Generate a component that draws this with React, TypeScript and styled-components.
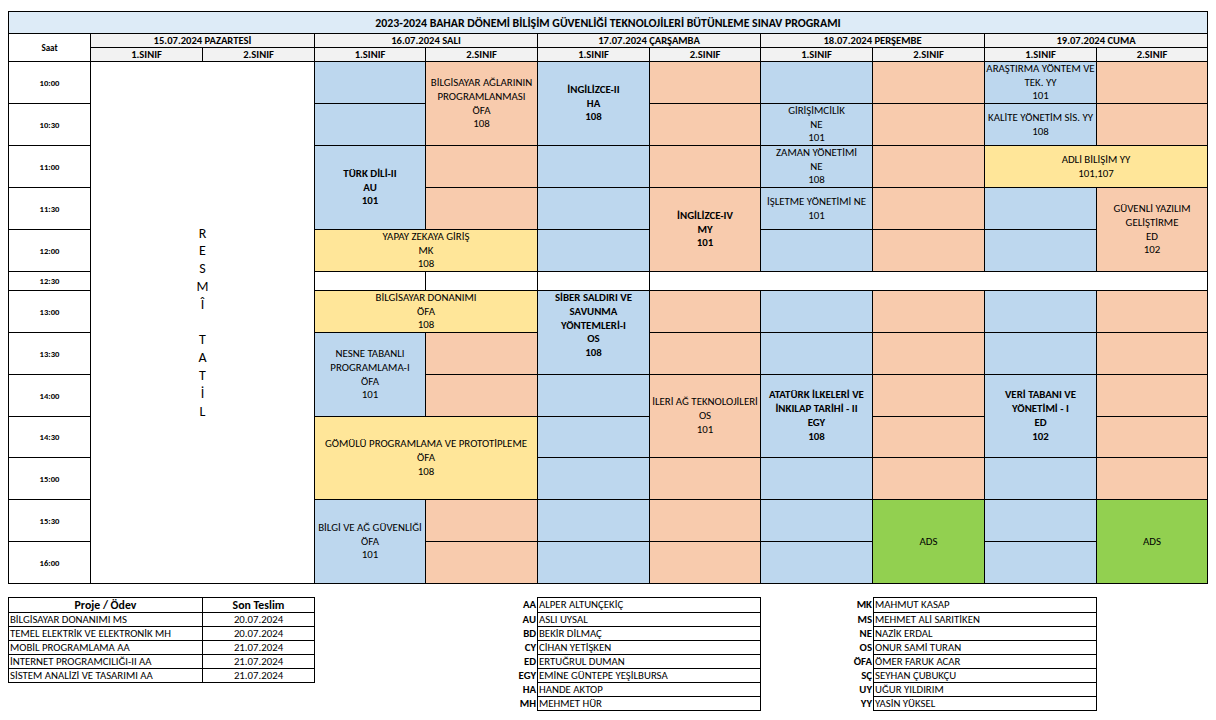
import React from "react";
import styled, { createGlobalStyle } from "styled-components";

const GlobalStyle = createGlobalStyle`
  html, body { margin: 0; padding: 0; background: #ffffff; }
  body { font-family: Calibri, Carlito, Lato, "Liberation Sans", sans-serif; color: #000000; }
  * { box-sizing: border-box; }
`;

const COLORS = {
  blue: "#BDD7EE",
  peach: "#F8CBAD",
  yellow: "#FFE699",
  green: "#92D050",
  white: "#FFFFFF",
} as const;
type Tone = keyof typeof COLORS;

const Page = styled.div`
  padding: 11px 0 0 8px;
`;

const Sheet = styled.div`
  display: grid;
  width: max-content;
  grid-template-columns: 81px 111px 111px 110px 111px 111px 110px 111px 111px 111px 110px;
  grid-template-rows: 21px 13px 13px repeat(5, 41px) 18px 41px 41px 41px 40px 41px 41px 41px;
  gap: 1px;
  background: #000000;
  border: 1px solid #000000;
`;

const Title = styled.div`
  grid-column: 1 / -1;
  grid-row: 1;
  background: #ddebf7;
  display: flex;
  align-items: center;
  justify-content: center;
  font-weight: 700;
  font-size: 11.85px;
  white-space: nowrap;
`;

const SaatHead = styled.div`
  grid-column: 1;
  grid-row: 2 / span 2;
  background: #ffffff;
  display: flex;
  align-items: center;
  justify-content: center;
  font-weight: 700;
  font-size: 9px;
`;

const HeadCell = styled.div<{ $col: number; $row: number; $span: number }>`
  grid-column: ${(p) => p.$col} / span ${(p) => p.$span};
  grid-row: ${(p) => p.$row};
  background: #f2f2f2;
  display: flex;
  align-items: center;
  justify-content: center;
  font-weight: 700;
  font-size: 10.6px;
  line-height: 13px;
  white-space: nowrap;
`;

const TimeCell = styled.div<{ $row: number }>`
  grid-column: 1;
  grid-row: ${(p) => p.$row};
  background: #ffffff;
  display: flex;
  align-items: center;
  justify-content: center;
  font-weight: 700;
  font-size: 8.6px;
`;

const Slot = styled.div<{
  $col: number;
  $row: number;
  $cs: number;
  $rs: number;
  $tone: Tone;
  $bold: boolean;
  $lift: number;
}>`
  grid-column: ${(p) => p.$col} / span ${(p) => p.$cs};
  grid-row: ${(p) => p.$row} / span ${(p) => p.$rs};
  background: ${(p) => COLORS[p.$tone]};
  display: flex;
  flex-direction: column;
  align-items: center;
  justify-content: center;
  padding-bottom: ${(p) => p.$lift}px;
  font-size: 10.86px;
  line-height: 13.8px;
  font-weight: ${(p) => (p.$bold ? 700 : 400)};
  text-align: center;
  overflow: hidden;
`;

const Line = styled.span`
  display: block;
  white-space: nowrap;
`;

const Holiday = styled.div`
  grid-column: 2 / span 2;
  grid-row: 4 / span 13;
  background: #ffffff;
  display: flex;
  flex-direction: column;
  align-items: center;
  justify-content: center;
  font-size: 14px;
  line-height: 17.8px;
`;

const Letter = styled.span`
  display: block;
  height: 17.8px;
`;

const Footer = styled.div`
  margin-top: 13px;
  display: grid;
  grid-template-columns: 307px 110px 112px 224px 112px 224px;
  align-items: start;
  font-size: 10.8px;
`;

const DeadlineTable = styled.div`
  grid-column: 1;
  display: grid;
  grid-template-columns: 193px 111px;
  grid-template-rows: 14px repeat(5, 13px);
  gap: 1px;
  background: #000000;
  border: 1px solid #000000;
`;

const DeadlineHead = styled.div`
  background: #ffffff;
  font-weight: 700;
  font-size: 11.8px;
  text-align: center;
  line-height: 14px;
  white-space: nowrap;
`;

const DeadlineCell = styled.div<{ $center?: boolean }>`
  background: #ffffff;
  text-align: ${(p) => (p.$center ? "center" : "left")};
  padding-left: ${(p) => (p.$center ? 0 : 1)}px;
  line-height: 13px;
  white-space: nowrap;
  overflow: hidden;
`;

const AbbrColumn = styled.div<{ $col: number }>`
  grid-column: ${(p) => p.$col};
  display: grid;
  grid-template-rows: 14px repeat(7, 13px);
  gap: 1px;
  padding-top: 1px;
  padding-right: 1px;
  text-align: right;
  font-weight: 700;
`;

const AbbrItem = styled.div`
  line-height: 13px;
  white-space: nowrap;
`;

const NameBox = styled.div<{ $col: number }>`
  grid-column: ${(p) => p.$col};
  display: grid;
  grid-template-rows: 14px repeat(7, 13px);
  gap: 1px;
  background: #000000;
  border: 1px solid #000000;
`;

const NameItem = styled.div`
  background: #ffffff;
  padding-left: 1px;
  line-height: 13px;
  white-space: nowrap;
`;

type Cell = {
  c: number;
  t: number;
  cs?: number;
  rs?: number;
  tone: Tone;
  bold?: boolean;
  lift?: number;
  lines?: string[];
};

const cells: Cell[] = [
  // Salı
  { c: 2, t: 0, tone: "blue" },
  { c: 2, t: 1, tone: "blue" },
  { c: 3, t: 0, rs: 2, tone: "peach", lines: ["BİLGİSAYAR AĞLARININ", "PROGRAMLANMASI", "ÖFA", "108"] },
  { c: 2, t: 2, rs: 2, tone: "blue", bold: true, lines: ["TÜRK DİLİ-II", "AU", "101"] },
  { c: 3, t: 2, tone: "peach" },
  { c: 3, t: 3, tone: "peach" },
  { c: 2, t: 4, cs: 2, tone: "yellow", lines: ["YAPAY ZEKAYA GİRİŞ", "MK", "108"] },
  { c: 2, t: 5, tone: "white" },
  { c: 3, t: 5, tone: "white" },
  { c: 2, t: 6, cs: 2, tone: "yellow", lines: ["BİLGİSAYAR DONANIMI", "ÖFA", "108"] },
  { c: 2, t: 7, rs: 2, tone: "blue", lines: ["NESNE TABANLI", "PROGRAMLAMA-I", "ÖFA", "101"] },
  { c: 3, t: 7, tone: "peach" },
  { c: 3, t: 8, tone: "peach" },
  { c: 2, t: 9, cs: 2, rs: 2, tone: "yellow", lines: ["GÖMÜLÜ PROGRAMLAMA VE PROTOTİPLEME", "ÖFA", "108"] },
  { c: 2, t: 11, rs: 2, tone: "blue", lines: ["BİLGİ VE AĞ GÜVENLİĞİ", "ÖFA", "101"] },
  { c: 3, t: 11, tone: "peach" },
  { c: 3, t: 12, tone: "peach" },
  // Çarşamba
  { c: 4, t: 0, rs: 2, tone: "blue", bold: true, lines: ["İNGİLİZCE-II", "HA", "108"] },
  { c: 5, t: 0, tone: "peach" },
  { c: 5, t: 1, tone: "peach" },
  { c: 4, t: 2, tone: "blue" },
  { c: 4, t: 3, tone: "blue" },
  { c: 4, t: 4, tone: "blue" },
  { c: 5, t: 2, tone: "peach" },
  { c: 5, t: 3, rs: 2, tone: "peach", bold: true, lines: ["İNGİLİZCE-IV", "MY", "101"] },
  { c: 4, t: 5, tone: "white" },
  { c: 5, t: 5, cs: 5, tone: "white" },
  { c: 4, t: 6, rs: 2, tone: "blue", bold: true, lift: 14, lines: ["SİBER SALDIRI VE", "SAVUNMA", "YÖNTEMLERİ-I", "OS", "108"] },
  { c: 4, t: 8, tone: "blue" },
  { c: 4, t: 9, tone: "blue" },
  { c: 4, t: 10, tone: "blue" },
  { c: 4, t: 11, tone: "blue" },
  { c: 4, t: 12, tone: "blue" },
  { c: 5, t: 6, tone: "peach" },
  { c: 5, t: 7, tone: "peach" },
  { c: 5, t: 8, rs: 2, tone: "peach", lines: ["İLERİ AĞ TEKNOLOJİLERİ", "OS", "101"] },
  { c: 5, t: 10, tone: "peach" },
  { c: 5, t: 11, tone: "peach" },
  { c: 5, t: 12, tone: "peach" },
  // Perşembe
  { c: 6, t: 0, tone: "blue" },
  { c: 6, t: 1, tone: "blue", lines: ["GİRİŞİMCİLİK", "NE", "101"] },
  { c: 6, t: 2, tone: "blue", lines: ["ZAMAN YÖNETİMİ", "NE", "108"] },
  { c: 6, t: 3, tone: "blue", lines: ["İŞLETME YÖNETİMİ NE", "101"] },
  { c: 6, t: 4, tone: "blue" },
  { c: 6, t: 6, tone: "blue" },
  { c: 6, t: 7, tone: "blue" },
  { c: 6, t: 8, rs: 2, tone: "blue", bold: true, lines: ["ATATÜRK İLKELERİ VE", "İNKILAP TARİHİ - II", "EGY", "108"] },
  { c: 6, t: 10, tone: "blue" },
  { c: 6, t: 11, tone: "blue" },
  { c: 6, t: 12, tone: "blue" },
  { c: 7, t: 0, tone: "peach" },
  { c: 7, t: 1, tone: "peach" },
  { c: 7, t: 2, tone: "peach" },
  { c: 7, t: 3, tone: "peach" },
  { c: 7, t: 4, tone: "peach" },
  { c: 7, t: 6, tone: "peach" },
  { c: 7, t: 7, tone: "peach" },
  { c: 7, t: 8, tone: "peach" },
  { c: 7, t: 9, tone: "peach" },
  { c: 7, t: 10, tone: "peach" },
  { c: 7, t: 11, rs: 2, tone: "green", lines: ["ADS"] },
  // Cuma
  { c: 8, t: 0, tone: "blue", lines: ["ARAŞTIRMA YÖNTEM VE", "TEK. YY", "101"] },
  { c: 8, t: 1, tone: "blue", lines: ["KALİTE YÖNETİM SİS. YY", "108"] },
  { c: 8, t: 2, cs: 2, tone: "yellow", lines: ["ADLİ BİLİŞİM YY", "101,107"] },
  { c: 8, t: 3, tone: "blue" },
  { c: 8, t: 4, tone: "blue" },
  { c: 9, t: 0, tone: "peach" },
  { c: 9, t: 1, tone: "peach" },
  { c: 9, t: 3, rs: 2, tone: "peach", lines: ["GÜVENLİ YAZILIM", "GELİŞTİRME", "ED", "102"] },
  { c: 8, t: 6, tone: "blue" },
  { c: 8, t: 7, tone: "blue" },
  { c: 8, t: 8, rs: 2, tone: "blue", bold: true, lines: ["VERİ TABANI VE", "YÖNETİMİ - I", "ED", "102"] },
  { c: 8, t: 10, tone: "blue" },
  { c: 8, t: 11, tone: "blue" },
  { c: 8, t: 12, tone: "blue" },
  { c: 9, t: 6, tone: "peach" },
  { c: 9, t: 7, tone: "peach" },
  { c: 9, t: 8, tone: "peach" },
  { c: 9, t: 9, tone: "peach" },
  { c: 9, t: 10, tone: "peach" },
  { c: 9, t: 11, rs: 2, tone: "green", lines: ["ADS"] },
];

const days = [
  "15.07.2024 PAZARTESİ",
  "16.07.2024 SALI",
  "17.07.2024 ÇARŞAMBA",
  "18.07.2024 PERŞEMBE",
  "19.07.2024 CUMA",
];

const times = ["10:00", "10:30", "11:00", "11:30", "12:00", "12:30", "13:00", "13:30", "14:00", "14:30", "15:00", "15:30", "16:00"];

const holiday = ["R", "E", "S", "M", "Î", "", "T", "A", "T", "İ", "L"];

const deadlines = [
  ["BİLGİSAYAR DONANIMI MS", "20.07.2024"],
  ["TEMEL ELEKTRİK VE ELEKTRONİK MH", "20.07.2024"],
  ["MOBİL PROGRAMLAMA AA", "21.07.2024"],
  ["İNTERNET PROGRAMCILIĞI-II AA", "21.07.2024"],
  ["SİSTEM ANALİZİ VE TASARIMI AA", "21.07.2024"],
];

const teachersA = [
  ["AA", "ALPER ALTUNÇEKİÇ"],
  ["AU", "ASLI UYSAL"],
  ["BD", "BEKİR DİLMAÇ"],
  ["CY", "CİHAN YETİŞKEN"],
  ["ED", "ERTUĞRUL DUMAN"],
  ["EGY", "EMİNE GÜNTEPE YEŞİLBURSA"],
  ["HA", "HANDE AKTOP"],
  ["MH", "MEHMET HÜR"],
];

const teachersB = [
  ["MK", "MAHMUT KASAP"],
  ["MS", "MEHMET ALİ SARITİKEN"],
  ["NE", "NAZİK ERDAL"],
  ["OS", "ONUR SAMİ TURAN"],
  ["ÖFA", "ÖMER FARUK ACAR"],
  ["SÇ", "SEYHAN ÇUBUKÇU"],
  ["UY", "UĞUR YILDIRIM"],
  ["YY", "YASİN YÜKSEL"],
];

function Legend({ abbrCol, list }: { abbrCol: number; list: string[][] }) {
  return (
    <>
      <AbbrColumn $col={abbrCol}>
        {list.map(([a]) => (
          <AbbrItem key={a}>{a}</AbbrItem>
        ))}
      </AbbrColumn>
      <NameBox $col={abbrCol + 1}>
        {list.map(([a, n]) => (
          <NameItem key={a}>{n}</NameItem>
        ))}
      </NameBox>
    </>
  );
}

export default function App() {
  return (
    <Page>
      <GlobalStyle />
      <Sheet>
        <Title>2023-2024 BAHAR DÖNEMİ BİLİŞİM GÜVENLİĞİ TEKNOLOJİLERİ BÜTÜNLEME SINAV PROGRAMI</Title>
        <SaatHead>Saat</SaatHead>
        {days.map((d, i) => (
          <HeadCell key={d} $col={2 + i * 2} $row={2} $span={2}>
            {d}
          </HeadCell>
        ))}
        {days.map((d, i) => (
          <React.Fragment key={"cls" + d}>
            <HeadCell $col={2 + i * 2} $row={3} $span={1}>
              1.SINIF
            </HeadCell>
            <HeadCell $col={3 + i * 2} $row={3} $span={1}>
              2.SINIF
            </HeadCell>
          </React.Fragment>
        ))}
        {times.map((t, i) => (
          <TimeCell key={t} $row={4 + i}>
            {t}
          </TimeCell>
        ))}
        <Holiday>
          {holiday.map((l, i) => (
            <Letter key={i}>{l || "\u00a0"}</Letter>
          ))}
        </Holiday>
        {cells.map((cell) => (
          <Slot
            key={`${cell.c}-${cell.t}`}
            $col={cell.c + 2}
            $row={cell.t + 4}
            $cs={cell.cs ?? 1}
            $rs={cell.rs ?? 1}
            $tone={cell.tone}
            $bold={!!cell.bold}
            $lift={cell.lift ?? 0}
          >
            {(cell.lines ?? []).map((l, i) => (
              <Line key={i}>{l}</Line>
            ))}
          </Slot>
        ))}
      </Sheet>
      <Footer>
        <DeadlineTable>
          <DeadlineHead>Proje / Ödev</DeadlineHead>
          <DeadlineHead>Son Teslim</DeadlineHead>
          {deadlines.map(([n, d]) => (
            <React.Fragment key={n}>
              <DeadlineCell>{n}</DeadlineCell>
              <DeadlineCell $center>{d}</DeadlineCell>
            </React.Fragment>
          ))}
        </DeadlineTable>
        <Legend abbrCol={3} list={teachersA} />
        <Legend abbrCol={5} list={teachersB} />
      </Footer>
    </Page>
  );
}
